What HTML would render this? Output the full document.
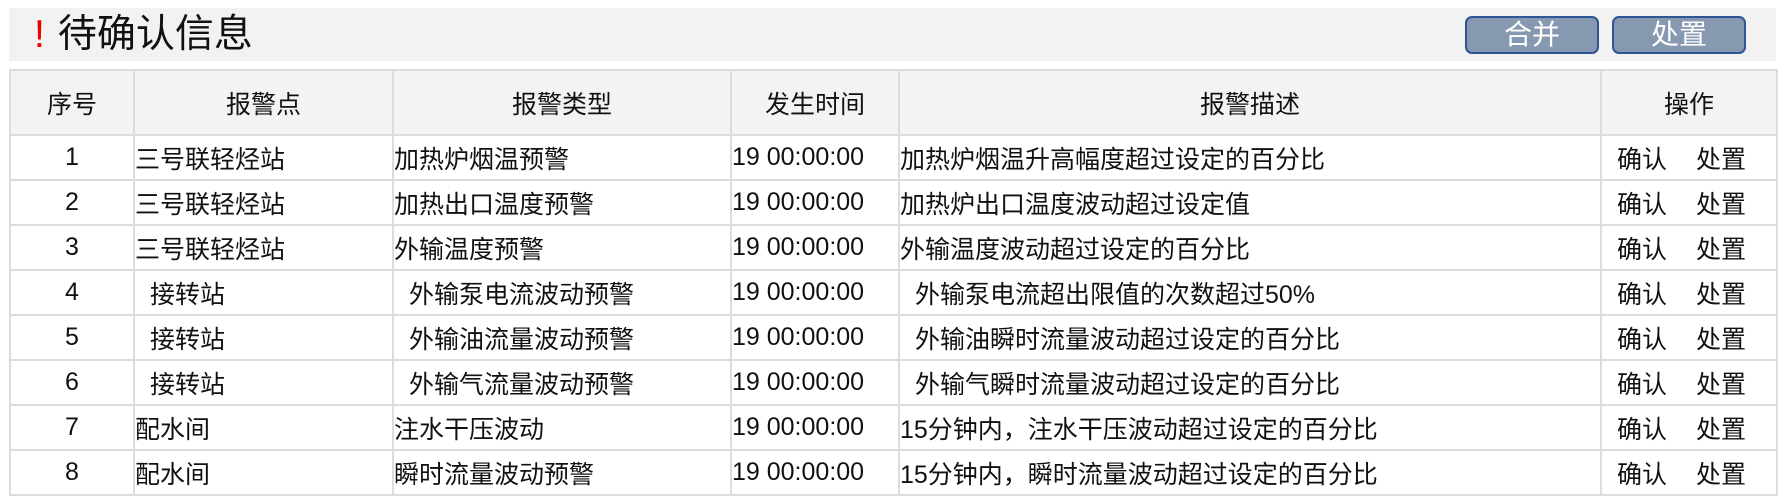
<!DOCTYPE html>
<html><head><meta charset="utf-8"><style>
*{margin:0;padding:0;box-sizing:border-box}
body{width:1783px;height:502px;background:#fff;font-family:"Liberation Sans","Noto Sans CJK SC",sans-serif;color:#111;position:relative;overflow:hidden}
.bar{position:absolute;left:9px;top:8px;width:1767px;height:53px;background:#f2f2f2}
.title{position:absolute;left:34px;top:8px;font-size:39px;line-height:53px}
.title b{color:#e00;font-weight:normal;margin-right:13px}
.btn{position:absolute;top:16px;height:38px;width:134px;background:#8798b1;border:2px solid #2f5597;border-radius:7px;color:#fff;font-size:28px;line-height:33px;text-align:center}
table{position:absolute;left:9px;top:69px;border-collapse:collapse;table-layout:fixed;width:1767px;font-size:25px}
td,th{border:2px solid #dcdcdc;height:45px;font-weight:normal;white-space:nowrap;overflow:hidden;padding:0;text-align:left}
th{height:65px;background:#f3f3f3;text-align:center}
td.c{text-align:center}
.p{padding-left:15px}
td.op{padding-left:15px}
.op span+span{margin-left:29px}
</style></head><body>
<div class="bar"></div>
<div class="title"><b>!</b>待确认信息</div>
<div class="btn" style="left:1465px">合并</div>
<div class="btn" style="left:1612px">处置</div>
<table>
<colgroup><col style="width:124px"><col style="width:259px"><col style="width:338px"><col style="width:168px"><col style="width:702px"><col style="width:176px"></colgroup>
<tr><th>序号</th><th>报警点</th><th>报警类型</th><th>发生时间</th><th>报警描述</th><th>操作</th></tr>
<tr><td class="c">1</td><td>三号联轻烃站</td><td>加热炉烟温预警</td><td>19 00:00:00</td><td>加热炉烟温升高幅度超过设定的百分比</td><td class="op"><span>确认</span><span>处置</span></td></tr>
<tr><td class="c">2</td><td>三号联轻烃站</td><td>加热出口温度预警</td><td>19 00:00:00</td><td>加热炉出口温度波动超过设定值</td><td class="op"><span>确认</span><span>处置</span></td></tr>
<tr><td class="c">3</td><td>三号联轻烃站</td><td>外输温度预警</td><td>19 00:00:00</td><td>外输温度波动超过设定的百分比</td><td class="op"><span>确认</span><span>处置</span></td></tr>
<tr><td class="c">4</td><td class="p">接转站</td><td class="p">外输泵电流波动预警</td><td>19 00:00:00</td><td class="p">外输泵电流超出限值的次数超过50%</td><td class="op"><span>确认</span><span>处置</span></td></tr>
<tr><td class="c">5</td><td class="p">接转站</td><td class="p">外输油流量波动预警</td><td>19 00:00:00</td><td class="p">外输油瞬时流量波动超过设定的百分比</td><td class="op"><span>确认</span><span>处置</span></td></tr>
<tr><td class="c">6</td><td class="p">接转站</td><td class="p">外输气流量波动预警</td><td>19 00:00:00</td><td class="p">外输气瞬时流量波动超过设定的百分比</td><td class="op"><span>确认</span><span>处置</span></td></tr>
<tr><td class="c">7</td><td>配水间</td><td>注水干压波动</td><td>19 00:00:00</td><td>15分钟内，注水干压波动超过设定的百分比</td><td class="op"><span>确认</span><span>处置</span></td></tr>
<tr><td class="c">8</td><td>配水间</td><td>瞬时流量波动预警</td><td>19 00:00:00</td><td>15分钟内，瞬时流量波动超过设定的百分比</td><td class="op"><span>确认</span><span>处置</span></td></tr>
</table>
</body></html>
